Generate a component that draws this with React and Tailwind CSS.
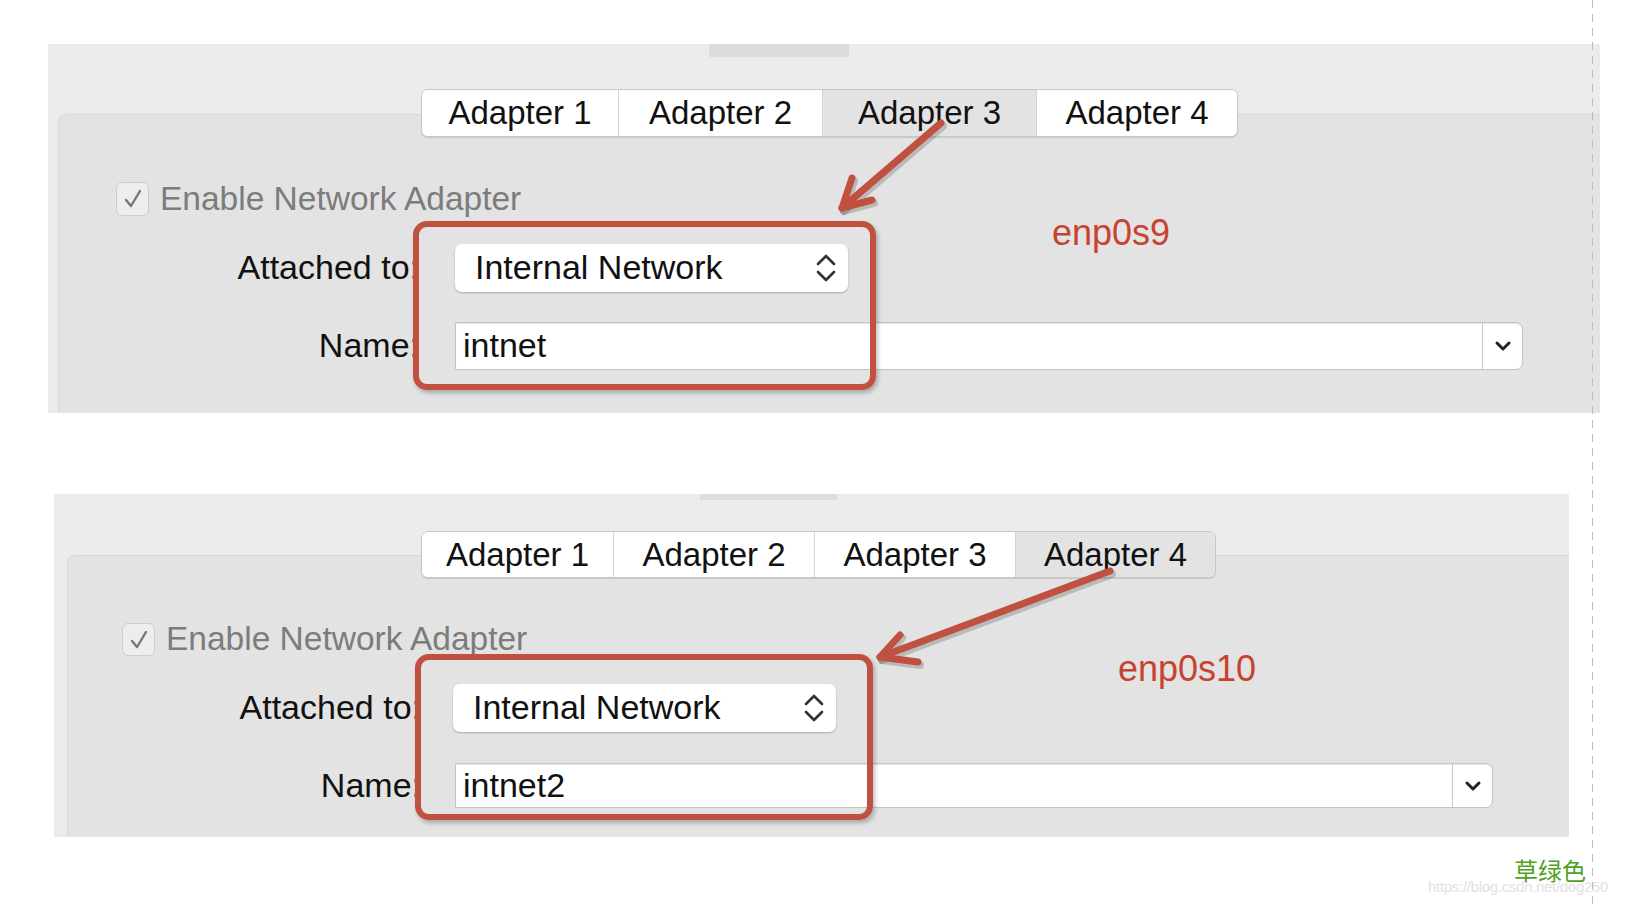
import React from "react";

const RED = "#c0503f";

const panels = [
  {
    key: "p1",
    section: "ml-[48px] w-[1552px] h-[369px]",
    strip: "ml-[661px] w-[140px] h-[13px]",
    inner: "mt-[57px] ml-[10px]",
    tabsWrap: "-mt-[26px] h-[48px]",
    tabs: [
      { label: "Adapter 1", w: "w-[196px]", active: false },
      { label: "Adapter 2", w: "w-[204px]", active: false },
      { label: "Adapter 3", w: "w-[214px]", active: true },
      { label: "Adapter 4", w: "w-[201px]", active: false },
    ],
    check: "mt-[45px] ml-[57px] h-[34px]",
    selectRow: "mt-[26px]",
    label: "w-[360px]",
    select: "ml-[36px] w-[393px] h-[48px]",
    nameRow: "mt-[27px]",
    input: "ml-[36px] w-[1068px] h-[48px]",
    name: "intnet",
    box: "left-[365px] top-[177px] w-[463px] h-[169px]",
    note: "left-[1004px] top-[166px]",
    noteText: "enp0s9",
    arrow: { x1: 893, y1: 79, x2: 794, y2: 164, a1: [804, 134], a2: [824, 156] },
  },
  {
    key: "p2",
    section: "mt-[81px] ml-[54px] w-[1515px] h-[343px]",
    strip: "ml-[646px] w-[137px] h-[6px]",
    inner: "mt-[55px] ml-[13px]",
    tabsWrap: "-mt-[25px] h-[47px]",
    tabs: [
      { label: "Adapter 1", w: "w-[191px]", active: false },
      { label: "Adapter 2", w: "w-[201px]", active: false },
      { label: "Adapter 3", w: "w-[201px]", active: false },
      { label: "Adapter 4", w: "w-[200px]", active: true },
    ],
    check: "mt-[45px] ml-[54px] h-[33px]",
    selectRow: "mt-[26px]",
    label: "w-[353px]",
    select: "ml-[32px] w-[383px] h-[48px]",
    nameRow: "mt-[27px]",
    input: "ml-[34px] w-[1038px] h-[45px]",
    name: "intnet2",
    box: "left-[361px] top-[160px] w-[458px] h-[166px]",
    note: "left-[1064px] top-[152px]",
    noteText: "enp0s10",
    arrow: { x1: 1056, y1: 77, x2: 826, y2: 163, a1: [846, 141], a2: [864, 168] },
  },
];

function Arrow({ a }) {
  return (
    <svg className="absolute left-0 top-0 pointer-events-none" width="1560" height="370">
      <g stroke="rgba(0,0,0,0.18)" strokeWidth="8" strokeLinecap="round" fill="none" transform="translate(2,3)">
        <line x1={a.x1} y1={a.y1} x2={a.x2} y2={a.y2} />
        <polyline points={`${a.a1[0]},${a.a1[1]} ${a.x2},${a.y2} ${a.a2[0]},${a.a2[1]}`} strokeLinejoin="round" />
      </g>
      <g stroke={RED} strokeWidth="7" strokeLinecap="round" fill="none">
        <line x1={a.x1} y1={a.y1} x2={a.x2} y2={a.y2} />
        <polyline points={`${a.a1[0]},${a.a1[1]} ${a.x2},${a.y2} ${a.a2[0]},${a.a2[1]}`} strokeLinejoin="round" />
      </g>
    </svg>
  );
}

function Panel({ p }) {
  return (
    <section className={`relative flex flex-col bg-[#ececec] ${p.section}`}>
      <div className={`bg-[#dcdcdc] ${p.strip}`} />
      <div className={`flex-1 flex flex-col bg-[#e3e3e3] rounded-tl-[8px] border-t border-l border-[#d8d8d8] ${p.inner}`}>
        <div className={`self-center flex overflow-hidden rounded-[7px] border border-[#c6c6c6] bg-white shadow-[0_1px_1px_rgba(0,0,0,0.12)] ${p.tabsWrap}`}>
          {p.tabs.map((t, i) => (
            <div
              key={t.label}
              className={`${t.w} flex items-center justify-center text-[33px] text-[#111] ${
                t.active ? "bg-[#e3e3e3]" : "bg-white"
              } ${i > 0 ? "border-l border-[#d4d4d4]" : ""}`}
            >
              {t.label}
            </div>
          ))}
        </div>

        <div className={`flex items-center gap-[11px] ${p.check}`}>
          <div className="w-[33px] h-full rounded-[6px] border border-[#cdcdcd] bg-[#ededed] flex items-center justify-center">
            <svg width="20" height="22" viewBox="0 0 20 22">
              <path d="M3 12 L8 18 L17 3" stroke="#777" strokeWidth="2.4" fill="none" strokeLinecap="round" strokeLinejoin="round" />
            </svg>
          </div>
          <span className="text-[33.5px] text-[#7c7c7c]">Enable Network Adapter</span>
        </div>

        <div className={`flex items-center ${p.selectRow}`}>
          <span className={`text-right text-[34px] text-[#111] ${p.label}`}>Attached to:</span>
          <div className={`flex items-center justify-between rounded-[7px] bg-white pl-[20px] pr-[11px] shadow-[0_1px_2px_rgba(0,0,0,0.25)] ${p.select}`}>
            <span className="text-[34px] text-[#111]">Internal Network</span>
            <svg width="22" height="34" viewBox="0 0 22 34">
              <path d="M3 13 L11 5 L19 13" stroke="#333" strokeWidth="2.6" fill="none" strokeLinecap="round" strokeLinejoin="round" />
              <path d="M3 21 L11 29 L19 21" stroke="#333" strokeWidth="2.6" fill="none" strokeLinecap="round" strokeLinejoin="round" />
            </svg>
          </div>
        </div>

        <div className={`flex items-center ${p.nameRow}`}>
          <span className={`text-right text-[34px] text-[#111] ${p.label}`}>Name:</span>
          <div className={`flex rounded-r-[7px] bg-white border border-[#c4c4c4] shadow-[inset_0_1px_1px_rgba(0,0,0,0.1)] ${p.input}`}>
            <div className="flex-1 flex items-center pl-[7px] text-[34px] text-[#111]">{p.name}</div>
            <div className="w-[40px] border-l border-[#c8c8c8] flex items-center justify-center">
              <svg width="18" height="12" viewBox="0 0 18 12">
                <path d="M3 3 L9 9 L15 3" stroke="#222" strokeWidth="3" fill="none" strokeLinecap="round" strokeLinejoin="round" />
              </svg>
            </div>
          </div>
        </div>
      </div>

      <div className={`absolute rounded-[14px] border-[6px] border-[#c0503f] shadow-[2px_3px_4px_rgba(0,0,0,0.25)] ${p.box}`} />
      <Arrow a={p.arrow} />
      <span className={`absolute text-[36px] text-[#c8432f] leading-[46px] ${p.note}`}>{p.noteText}</span>
    </section>
  );
}

export default function App() {
  return (
    <div
      className="relative w-[1634px] h-[906px] overflow-hidden bg-white pt-[44px]"
      style={{ fontFamily: '"Liberation Sans", Arial, sans-serif' }}
    >
      {panels.map((p) => (
        <Panel key={p.key} p={p} />
      ))}

      <div className="mt-[18px] ml-[1514px] text-[24px] leading-[30px] text-[#4fa21c] font-['Noto_Sans_CJK_SC',sans-serif]">
        草绿色
      </div>
      <div className="absolute left-[1428px] top-[878px] text-[15px] leading-[18px] tracking-[-0.3px] text-[#e2e2e2]">
        https://blog.csdn.net/dog250
      </div>
      <div className="absolute left-[1592px] top-0 w-[1px] h-full bg-[repeating-linear-gradient(to_bottom,#bdbdbd_0_8px,transparent_8px_14px)]" />
    </div>
  );
}
